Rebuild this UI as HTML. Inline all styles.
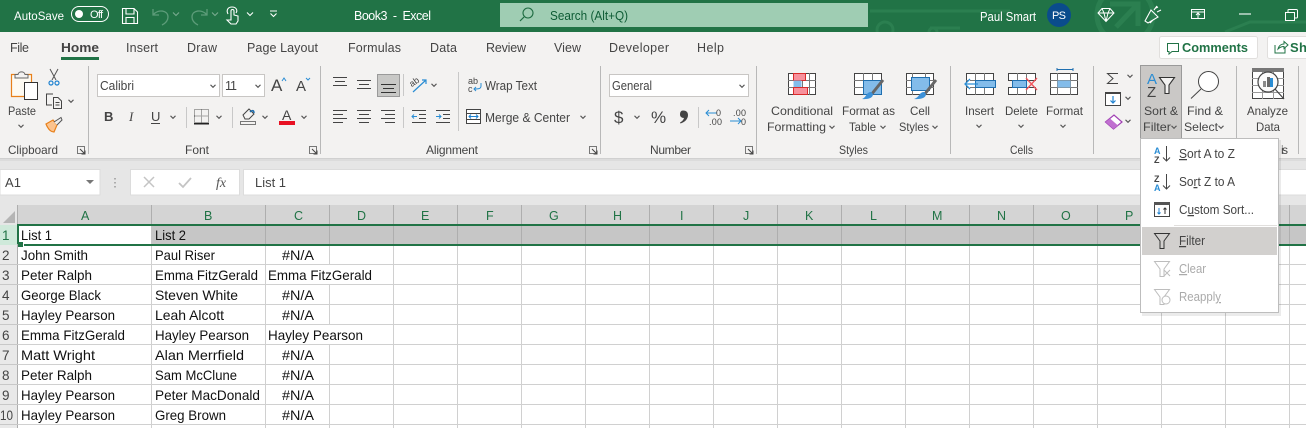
<!DOCTYPE html>
<html><head><meta charset="utf-8"><title>Book3 - Excel</title>
<style>
html,body{margin:0;padding:0;width:1306px;height:428px;overflow:hidden;background:#fff}
svg{display:block}
text{font-family:"Liberation Sans",sans-serif;font-size:12px;fill:#444;white-space:pre}
.w{fill:#fff}
.c{font-size:14px;fill:#111}
.t{font-size:12.5px;fill:#444}
.h{font-size:12.5px;fill:#217346}
.n{font-size:13.5px;fill:#444}
.m{font-size:12.5px;fill:#444}
.d{font-size:12.5px;fill:#aaa}
</style></head><body>
<svg width="1306" height="428" viewBox="0 0 1306 428" xmlns="http://www.w3.org/2000/svg">
<defs>
<path id="cv" d="M-2.500 -1.200L0 1.300L2.500 -1.200" fill="none" stroke="#555" stroke-width="1.100"/>
<path id="cw" d="M-3 -1.500L0 1.500L3 -1.500" fill="none" stroke="#fff" stroke-width="1.100"/>
<g id="dl"><rect x="0.500" y="0.500" width="7" height="7" fill="none" stroke="#777"/><path d="M3 3L8 8M8 4.500V8H4.500" fill="none" stroke="#444"/></g>
</defs>

<!-- title bar -->
<rect width="1306" height="32" fill="#217346"/>
<g fill="none" stroke="#2b7f50" stroke-width="3">
<circle cx="1125" cy="15" r="28" stroke-width="5"/><path d="M1110 4H1138V26M1136 6L1116 27" stroke-width="5"/>
<path d="M870 11H1010"/><circle cx="885" cy="30" r="8"/><circle cx="933" cy="32" r="4"/><path d="M1225 32L1250 22H1306M930 28H960"/>
</g>
<text class="w" x="14" y="20" textLength="50" lengthAdjust="spacingAndGlyphs">AutoSave</text>
<rect x="71.500" y="6.500" width="37" height="15" rx="7.500" fill="none" stroke="#fff"/>
<circle cx="79" cy="14" r="4" fill="#fff"/>
<text class="w" x="90" y="18" style="font-size:11px" textLength="13">Off</text>
<path d="M122.500 8.500H134L137.500 12V23.500H122.500ZM126 8.500V14H134V8.500M126 23.500V17.500H134V23.500" fill="none" stroke="#fff" stroke-width="1.100"/>
<path d="M153 9V15H159M153.500 14.500C158 9 168 10 168 17C168 20 166 23 162 25" fill="none" stroke="#5c9c79" stroke-width="1.300"/>
<use href="#cw" x="176" y="14" opacity=".4"/>
<path d="M207 9V15H201M206.500 14.500C202 9 192 10 192 17C192 20 194 23 198 25" fill="none" stroke="#5c9c79" stroke-width="1.300"/>
<use href="#cw" x="215" y="14" opacity=".4"/>
<path d="M231 20V11C231 9 234 9 234 11V15L238 16V21L236 24H231L227 20Z M228 14C226 10 228 7 232 7C236 7 238 10 236 13" fill="none" stroke="#fff" stroke-width="1.100"/>
<use href="#cw" x="250" y="14"/>
<path d="M270 11H277" stroke="#fff"/><use href="#cw" x="273.500" y="15"/>
<text class="w" x="354" y="20" textLength="77" style="font-size:12.500px">Book3  -  Excel</text>
<rect x="500" y="3" width="368" height="24" fill="#9fcdb3"/>
<circle cx="528" cy="13" r="5" fill="none" stroke="#1d6b40" stroke-width="1.100"/><path d="M524 17L520 21" stroke="#1d6b40" stroke-width="1.200"/>
<text x="550" y="20" textLength="78" lengthAdjust="spacingAndGlyphs" style="fill:#0e5c35;font-size:12.500px">Search (Alt+Q)</text>
<text class="w" x="980" y="21" textLength="56" lengthAdjust="spacingAndGlyphs" style="font-size:12.500px">Paul Smart</text>
<circle cx="1059" cy="15" r="12" fill="#0a4c8c"/>
<text class="w" x="1052" y="19" style="font-size:11px" textLength="14">PS</text>
<path d="M1102 8.500H1110L1114 13L1106 21.500L1098 13ZM1098 13H1114M1102 8.500L1104 13L1106 21.500L1108 13L1110 8.500" fill="none" stroke="#fff"/>
<path d="M1145 21L1151 10L1158 17L1148 23ZM1150 23L1153 20M1154 10L1157 6M1157 12L1161 10M1156 8L1158 7" fill="none" stroke="#fff" stroke-width="1.100"/>
<path d="M1191.500 9.500H1204.500V18.500H1191.500ZM1191.500 12H1204.500M1198 18V13M1196 15L1198 13L1200 15" fill="none" stroke="#fff"/>
<path d="M1239 14H1251" stroke="#fff" stroke-width="1.100"/>
<path d="M1285.500 12.500H1294.500V20.500H1285.500ZM1288 12V10C1288 9.500 1288 9.500 1289 9.500H1296C1297.500 9.500 1297.500 10 1297.500 11V17C1297.500 18 1297 18 1295 18" fill="none" stroke="#fff"/>

<!-- ribbon bg -->
<rect y="32" width="1306" height="126" fill="#f3f2f1"/>
<rect y="158" width="1306" height="47" fill="#e6e6e6"/>
<rect y="158" width="1306" height="1" fill="#d0d0d0"/><rect y="159" width="1306" height="2" fill="#dcdcdc"/>

<!-- tabs -->
<text class="t" x="10" y="52" textLength="19">File</text>
<text class="t" x="61" y="52" textLength="38" lengthAdjust="spacingAndGlyphs" style="font-weight:bold;fill:#444">Home</text>
<rect x="61" y="57" width="38" height="3" fill="#217346"/>
<text class="t" x="126" y="52" textLength="32">Insert</text>
<text class="t" x="187" y="52" textLength="30">Draw</text>
<text class="t" x="247" y="52" textLength="71">Page Layout</text>
<text class="t" x="348" y="52" textLength="53">Formulas</text>
<text class="t" x="430" y="52" textLength="27">Data</text>
<text class="t" x="486" y="52" textLength="40">Review</text>
<text class="t" x="554" y="52" textLength="27">View</text>
<text class="t" x="609" y="52" textLength="60">Developer</text>
<text class="t" x="697" y="52" textLength="27">Help</text>
<rect x="1159.500" y="36.500" width="98" height="22" rx="2" fill="#fff" stroke="#e1dfdd"/>
<path d="M1167.500 43.500H1178.500V51.500H1172L1169 54V51.500H1167.500Z" fill="none" stroke="#217346"/>
<text x="1182" y="52" textLength="66" lengthAdjust="spacingAndGlyphs" style="font-size:13px;font-weight:bold;fill:#217346">Comments</text>
<rect x="1267.500" y="36.500" width="60" height="22" rx="2" fill="#fff" stroke="#e1dfdd"/>
<path d="M1275 45V53H1285V48M1278 49C1279 45 1282 44 1284 44V41.500L1288 45L1284 48.500V46.500C1282 46.500 1280 47 1278 49Z" fill="none" stroke="#217346"/>
<text x="1290" y="52" textLength="17" style="font-size:13px;font-weight:bold;fill:#217346">Sh</text>

<!-- separators -->
<g fill="#b8b8b8">
<rect x="88" y="66" width="1" height="88"/><rect x="320" y="66" width="1" height="88"/><rect x="600" y="66" width="1" height="88"/><rect x="756" y="66" width="1" height="88"/><rect x="950" y="66" width="1" height="88"/><rect x="1093" y="66" width="1" height="88"/><rect x="1236" y="66" width="1" height="88"/><rect x="1298" y="66" width="1" height="88"/>
</g>
<g fill="#c8c8c8"><rect x="186" y="107" width="1" height="21"/><rect x="232" y="107" width="1" height="21"/><rect x="403" y="74" width="1" height="22"/><rect x="403" y="107" width="1" height="21"/><rect x="458" y="72" width="1" height="59"/><rect x="698" y="107" width="1" height="21"/></g>

<!-- group labels -->
<text x="8" y="154" textLength="50" lengthAdjust="spacingAndGlyphs">Clipboard</text>
<text x="185" y="154" textLength="24">Font</text>
<text x="426" y="154" textLength="52">Alignment</text>
<text x="650" y="154" textLength="41">Number</text>
<text x="839" y="154" textLength="29" lengthAdjust="spacingAndGlyphs">Styles</text>
<text x="1010" y="154" textLength="23" lengthAdjust="spacingAndGlyphs">Cells</text>
<text x="1281" y="154" textLength="7">is</text>
<use href="#dl" x="77" y="146"/><use href="#dl" x="309" y="146"/><use href="#dl" x="589" y="146"/><use href="#dl" x="745" y="146"/>

<!-- clipboard -->
<path d="M11.500 74.500H31.500V96.500H11.500Z" fill="#fdfaf2" stroke="#e8801a" stroke-width="1.200"/>
<path d="M15 78V74.500H18C18.500 71 24.500 71 25 74.500H28V78Z" fill="#f3f2f1" stroke="#666"/>
<rect x="24.500" y="82.500" width="13" height="17" fill="#fff" stroke="#333"/>
<text x="8" y="115" textLength="28" lengthAdjust="spacingAndGlyphs">Paste</text><use href="#cv" x="21" y="126"/>
<path d="M50 69L56 80M58 69L52 80" fill="none" stroke="#555"/><circle cx="51" cy="83" r="2" fill="none" stroke="#1f82d0" stroke-width="1.200"/><circle cx="57" cy="83" r="2" fill="none" stroke="#1f82d0" stroke-width="1.200"/>
<path d="M52 105H46.500V94H53M53.500 97.500H58L61.500 101V108.500H53.500ZM55.500 102.500H59.500M55.500 105H59.500" fill="none" stroke="#444"/><use href="#cv" x="71" y="101"/>
<path d="M46 124L53 120L57 125L54 132C51 132 48 129 46 124Z" fill="#fbc38e" stroke="#e8801a" stroke-width="1.200"/><path d="M54 122L61 117.500L62 120L57 125" fill="#eee" stroke="#555"/>

<!-- font -->
<rect x="97.500" y="74.500" width="122" height="22" fill="#fff" stroke="#c8c6c4"/>
<text x="100" y="90" textLength="34" lengthAdjust="spacingAndGlyphs" style="font-size:12.500px">Calibri</text><use href="#cv" x="213" y="86"/>
<rect x="222.500" y="74.500" width="42" height="22" fill="#fff" stroke="#c8c6c4"/>
<text x="225" y="90" textLength="12" style="font-size:12.500px">11</text><use href="#cv" x="258" y="86"/>
<text x="271" y="91" style="font-size:17px" textLength="11">A</text><path d="M282 81L284 78L286 81" fill="none" stroke="#2a8dd4"/>
<text x="296" y="91" style="font-size:15px" textLength="10">A</text><path d="M306 78L308 80L310 78" fill="none" stroke="#2a8dd4"/>
<text x="104" y="121" style="font-weight:bold;font-size:13px" textLength="9">B</text>
<text x="129" y="121" style="font-style:italic;font-size:13px;font-family:'Liberation Serif',serif" textLength="6">I</text>
<text x="151" y="121" style="font-size:13px" textLength="9">U</text><path d="M151 123.500H160" stroke="#444"/>
<use href="#cv" x="173" y="117"/>
<path d="M194.500 109.500H208.500V122.500H194.500ZM201.500 109.500V122.500M194.500 116H208.500" fill="none" stroke="#555" stroke-dasharray="1 1"/><rect x="194" y="123" width="15" height="1.500" fill="#222"/>
<use href="#cv" x="219" y="117"/>
<path d="M243 115L249 109L254 114L249 119H245Z" fill="none" stroke="#444"/><path d="M250 112C252 110 254 110 254 113" fill="none" stroke="#1f6fb0" stroke-width="1.500"/><rect x="240.500" y="121.500" width="15" height="3" fill="#f3f2f1" stroke="#777"/>
<use href="#cv" x="265" y="117"/>
<text x="282" y="120" style="font-size:14px" textLength="11">A</text><rect x="279" y="121" width="16" height="4" fill="#e81123"/>
<use href="#cv" x="304" y="117"/>

<!-- alignment -->
<g stroke="#444" fill="none">
<path d="M333 77.500H347M335 81.500H345M333 85.500H347"/>
<path d="M357 80.500H371M359 84.500H369M357 88.500H371"/>
</g>
<rect x="377.500" y="74.500" width="22" height="22" fill="#c8c8c6" stroke="#9a9a9a"/>
<path d="M381 84.500H396M383 88.500H394M381 92.500H396" stroke="#333" fill="none"/>
<path d="M333 110.500H347M333 114.500H343M333 118.500H347M333 122.500H343M357 110.500H371M359 114.500H369M357 118.500H371M359 122.500H369M381 110.500H395M385 114.500H395M381 118.500H395M385 122.500H395" stroke="#444" fill="none"/>
<text x="411" y="85" style="font-size:9px" transform="rotate(-35 415 85)">ab</text><path d="M413 92L426 80M422 80H426V84" fill="none" stroke="#2a8dd4" stroke-width="1.200"/>
<use href="#cv" x="434" y="85"/>
<path d="M412 110.500H426M412 122.500H426M419 114.500H426M419 118.500H426" stroke="#444" fill="none"/><path d="M417 116.500H412M414 114.500L412 116.500L414 118.500" stroke="#2a8dd4" fill="none"/>
<path d="M436 110.500H450M436 122.500H450M443 114.500H450M443 118.500H450" stroke="#444" fill="none"/><path d="M436 116.500H441M439 114.500L441 116.500L439 118.500" stroke="#2a8dd4" fill="none"/>
<text x="468" y="84" style="font-size:9px">ab</text><text x="468" y="92" style="font-size:9px">c</text><path d="M481 83V86C481 89 478 89 474 89M476 87L474 89L476 91" fill="none" stroke="#2a8dd4"/>
<text x="485" y="90" textLength="52" style="font-size:12.500px" lengthAdjust="spacingAndGlyphs">Wrap Text</text>
<rect x="466.500" y="109.500" width="14" height="14" fill="#fff" stroke="#444"/><path d="M466 113.500H481M466 119.500H481" stroke="#444"/><rect x="467" y="114" width="13" height="5" fill="#fff"/><path d="M469 116.500H478M471 114.500L469 116.500L471 118.500M476 114.500L478 116.500L476 118.500" stroke="#1f82d0" fill="none"/>
<text x="485" y="122" textLength="85" style="font-size:12.500px" lengthAdjust="spacingAndGlyphs">Merge &amp; Center</text><use href="#cv" x="583" y="117"/>

<!-- number -->
<rect x="609.500" y="74.500" width="139" height="22" fill="#fff" stroke="#c8c6c4"/>
<text x="612" y="90" textLength="40" style="font-size:12.500px" lengthAdjust="spacingAndGlyphs">General</text><use href="#cv" x="742" y="86"/>
<text x="614" y="123" style="font-size:17px" textLength="9.500">$</text><use href="#cv" x="637" y="117"/>
<text x="651" y="123" style="font-size:17px" textLength="16">%</text>
<path d="M683 110.500C686 110.500 688 112 688 115C688 119 685 122 680.500 123.500L680 122.500C682 121.500 683.500 120 684 118C681.500 118 680 116.500 680 114.500C680 112 681 110.500 683 110.500Z" fill="#444"/>
<path d="M717 113H706M709 110L706 113L709 116" fill="none" stroke="#2a8dd4"/>
<text x="716" y="116" style="font-size:9px">0</text><text x="709" y="125" style="font-size:9px" textLength="13">.00</text>
<text x="733" y="116" style="font-size:9px" textLength="13">.00</text><path d="M730 121H741M738 118L741 121L738 124" fill="none" stroke="#2a8dd4"/><text x="741" y="125" style="font-size:9px">0</text>

<!-- styles icons -->
<g>
<rect x="788.500" y="73.500" width="27" height="21" fill="#fff" stroke="#444"/>
<path d="M788 80.500H816M788 87.500H816M795.500 73V95M802.500 73V95M809.500 73V95" stroke="#777" fill="none"/>
<rect x="793.500" y="73.500" width="12" height="7" fill="#f7919c" stroke="#d92b2b"/>
<rect x="793.500" y="80.500" width="8" height="7" fill="#83bcea"/>
<rect x="793.500" y="87.500" width="14" height="7" fill="#f7919c" stroke="#d92b2b"/>

<rect x="854.500" y="73.500" width="27" height="21" fill="#fff" stroke="#444"/>
<path d="M854 80.500H882M854 87.500H882M863.500 73V95M872.500 73V95" stroke="#777" fill="none"/>
<rect x="863.500" y="80.500" width="18" height="14" fill="#83bcea" stroke="#1f6fb0"/>
<path d="M871 95L883 80" stroke="#666" stroke-width="3"/><path d="M871 92C875 94 873 100 862 99C867 97 866 92 871 92Z" fill="#3c91d8"/>

<rect x="906.500" y="73.500" width="27" height="21" fill="#fff" stroke="#444"/>
<path d="M906 80.500H934M906 87.500H934M912.500 73V95M925.500 73V95" stroke="#777" fill="none"/>
<rect x="911.500" y="77.500" width="18" height="13" fill="#83bcea" stroke="#1f6fb0"/>
<path d="M924 95L936 80" stroke="#666" stroke-width="3"/><path d="M924 92C928 94 926 100 914 99C920 97 919 92 924 92Z" fill="#3c91d8"/>
</g>
<text x="771" y="115" textLength="62" lengthAdjust="spacingAndGlyphs">Conditional</text>
<text x="767" y="131" textLength="59" lengthAdjust="spacingAndGlyphs">Formatting</text><use href="#cv" x="832" y="127"/>
<text x="842" y="115" textLength="53" lengthAdjust="spacingAndGlyphs">Format as</text>
<text x="849" y="131" textLength="27" lengthAdjust="spacingAndGlyphs">Table</text><use href="#cv" x="883" y="127"/>
<text x="910" y="115" textLength="20" lengthAdjust="spacingAndGlyphs">Cell</text>
<text x="899" y="131" textLength="30" lengthAdjust="spacingAndGlyphs">Styles</text><use href="#cv" x="935" y="127"/>

<!-- cells -->
<rect x="966.500" y="73.500" width="27" height="21" fill="#fff" stroke="#444"/>
<path d="M966 80.500H994M966 87.500H994M975.500 73V95M984.500 73V95" stroke="#777" fill="none"/>
<rect x="975.500" y="80.500" width="20" height="7" fill="#83bcea" stroke="#1f6fb0"/>
<path d="M965 84H978M970 79L965 84L970 89" fill="#fff" stroke="#2a8dd4" stroke-width="1.300"/>
<path d="M1008.500 73.500H1035.500V80.500H1008.500ZM1008.500 87.500H1035.500V94.500H1008.500Z" fill="#fff" stroke="#444"/>
<path d="M1017.500 73V80M1026.500 73V80M1017.500 87V95M1026.500 87V95" stroke="#777"/>
<rect x="1012.500" y="80.500" width="14" height="7" fill="#83bcea" stroke="#1f6fb0"/>
<path d="M1026 78L1037 90M1037 78L1026 90" stroke="#f0555d" stroke-width="1.300"/>
<path d="M1057 69.500H1073M1057 68V71M1073 68V71" stroke="#1f6fb0" fill="none"/>
<rect x="1050.500" y="73.500" width="27" height="21" fill="#fff" stroke="#444"/>
<path d="M1050 80.500H1078M1050 87.500H1078M1057.500 73V95M1070.500 73V95" stroke="#777" fill="none"/>
<rect x="1057.500" y="80.500" width="13" height="7" fill="#83bcea"/>
<text x="965" y="115" textLength="29" lengthAdjust="spacingAndGlyphs">Insert</text><use href="#cv" x="979" y="126"/>
<text x="1005" y="115" textLength="33" lengthAdjust="spacingAndGlyphs">Delete</text><use href="#cv" x="1021" y="126"/>
<text x="1046" y="115" textLength="37" lengthAdjust="spacingAndGlyphs">Format</text><use href="#cv" x="1063" y="126"/>

<!-- editing -->
<path d="M1118 73.500H1107.500L1113 78.500L1107.500 83.500H1118" fill="none" stroke="#444"/>
<use href="#cv" x="1130" y="76"/>
<rect x="1105.500" y="92.500" width="15" height="13" fill="#fff" stroke="#444"/><rect x="1105" y="92" width="16" height="2" fill="#444"/>
<path d="M1113 96V103M1110.500 100.500L1113 103L1115.500 100.500" fill="none" stroke="#1f82d0" stroke-width="1.200"/>
<use href="#cv" x="1128" y="98"/>
<path d="M1105.500 122L1114 115L1122 122L1113.500 129Z" fill="#fff" stroke="#a03fb3" stroke-width="1.200"/><path d="M1105.500 122L1110 118.500L1118 125.500L1113.500 129Z" fill="#c070d0"/>
<use href="#cv" x="1128" y="121"/>

<rect x="1140.500" y="65.500" width="41" height="73" fill="#cac8c6" stroke="#9a9a9a"/>
<text x="1147" y="84" style="font-size:15px;fill:#2a8dd4" textLength="11">A</text>
<text x="1147" y="97" style="font-size:15px;fill:#444" textLength="10">Z</text>
<path d="M1159.500 77.500H1174.500L1169 85V93.500H1165V85Z" fill="#f3f2f1" stroke="#333" stroke-width="1.100"/>
<text x="1144" y="115" textLength="34" lengthAdjust="spacingAndGlyphs">Sort &amp;</text>
<text x="1143" y="131" textLength="28" lengthAdjust="spacingAndGlyphs">Filter</text><use href="#cv" x="1174" y="127"/>
<circle cx="1208.500" cy="81.500" r="10" fill="#fff" stroke="#444"/><path d="M1201 89L1191 98.500" stroke="#444"/>
<text x="1187" y="115" textLength="36" lengthAdjust="spacingAndGlyphs">Find &amp;</text>
<text x="1184" y="131" textLength="34" lengthAdjust="spacingAndGlyphs">Select</text><use href="#cv" x="1221" y="127"/>

<rect x="1252.500" y="69.500" width="31" height="29" fill="#fff" stroke="#444"/><rect x="1252" y="68" width="32" height="4" fill="#777"/>
<path d="M1252 78.500H1284M1252 85.500H1284M1252 92.500H1284M1262.500 72V99M1273.500 72V99" stroke="#999"/>
<circle cx="1268" cy="82" r="10" fill="#fafafa" stroke="#444" stroke-width="1.200"/>
<rect x="1263" y="81" width="3" height="6" fill="#888"/><rect x="1267" y="77" width="3" height="10" fill="#666"/><rect x="1270" y="78" width="3" height="9" fill="#2a8dd4"/>
<path d="M1275 89L1284 99" stroke="#444" stroke-width="1.200"/>
<text x="1247" y="115" textLength="41" lengthAdjust="spacingAndGlyphs">Analyze</text>
<text x="1256" y="131" textLength="24" lengthAdjust="spacingAndGlyphs">Data</text>

<!-- name box / formula -->
<rect x="0" y="169.500" width="100" height="25.500" fill="#fff" stroke="#dcdcdc"/>
<text x="5" y="187" style="font-size:13px" textLength="16">A1</text>
<path d="M86 180H94L90 184Z" fill="#777"/>
<path d="M115 178V179.500M115 182V183.500M115 186V187.500" stroke="#999" stroke-width="1.500"/>
<rect x="130.500" y="169.500" width="109" height="25.500" fill="#fff" stroke="#dcdcdc"/>
<path d="M144 177L154 187M154 177L144 187" stroke="#c4c4c4" stroke-width="1.500"/>
<path d="M179 183L183 187L191 178" stroke="#c4c4c4" stroke-width="1.800" fill="none"/>
<text x="216" y="187" style="font-family:'Liberation Serif',serif;font-style:italic;font-size:14px;fill:#555">fx</text>
<rect x="243.500" y="169.500" width="1070" height="25.500" fill="#fff" stroke="#dcdcdc"/>
<text x="255" y="187" style="font-size:13px" textLength="31" lengthAdjust="spacingAndGlyphs">List 1</text>

<!-- headers -->
<rect x="0" y="205" width="1306" height="20" fill="#d4d4d4"/>
<rect x="0" y="205" width="18" height="20" fill="#e6e6e6"/>
<path d="M15 211V223H3Z" fill="#b5b5b5"/>
<rect x="0" y="225" width="18" height="203" fill="#e9e9e9"/>
<rect x="0" y="225" width="18" height="20" fill="#cfe9da"/>

<!-- row 1 fill -->
<rect x="151" y="226" width="1155" height="18" fill="#c6c6c6"/>

<!-- grid -->
<g stroke="#d0d0d0">
<path d="M18 264.500H1306M18 284.500H1306M18 304.500H1306M18 324.500H1306M18 344.500H1306M18 364.500H1306M18 384.500H1306M18 404.500H1306M18 424.500H1306"/>
<path d="M151.500 245V428M265.500 245V428M329.500 245V265M329.500 284V325M329.500 344V428M393.500 245V428M457.500 245V428M521.500 245V428M585.500 245V428M649.500 245V428M713.500 245V428M777.500 245V428M841.500 245V428M905.500 245V428M969.500 245V428M1033.500 245V428M1097.500 245V428M1161.500 245V428M1225.500 245V428M1289.500 245V428"/>
</g>
<g stroke="#aeaeae">
<path d="M17.500 205V428M151.500 205V225M265.500 205V225M329.500 205V225M393.500 205V225M457.500 205V225M521.500 205V225M585.500 205V225M649.500 205V225M713.500 205V225M777.500 205V225M841.500 205V225M905.500 205V225M969.500 205V225M1033.500 205V225M1097.500 205V225M1161.500 205V225M1225.500 205V225M1289.500 205V225"/>
<path d="M0 264.500H18M0 284.500H18M0 304.500H18M0 324.500H18M0 344.500H18M0 364.500H18M0 384.500H18M0 404.500H18M0 424.500H18" stroke="#c8c8c8"/>
<path d="M265.500 226V244M329.500 226V244M393.500 226V244M457.500 226V244M521.500 226V244M585.500 226V244M649.500 226V244M713.500 226V244M777.500 226V244M841.500 226V244M905.500 226V244M969.500 226V244M1033.500 226V244M1097.500 226V244M1161.500 226V244M1225.500 226V244M1289.500 226V244"/>
</g>
<text class="h" x="81" y="220">A</text><text class="h" x="204" y="220">B</text><text class="h" x="294" y="220">C</text><text class="h" x="357" y="220">D</text><text class="h" x="421" y="220">E</text><text class="h" x="486" y="220">F</text><text class="h" x="549" y="220">G</text><text class="h" x="613" y="220">H</text><text class="h" x="680" y="220">I</text><text class="h" x="743" y="220">J</text><text class="h" x="805" y="220">K</text><text class="h" x="870" y="220">L</text><text class="h" x="932" y="220">M</text><text class="h" x="997" y="220">N</text><text class="h" x="1061" y="220">O</text><text class="h" x="1125" y="220">P</text>
<text class="n" x="2" y="240" style="fill:#217346">1</text>
<text class="n" x="2" y="260">2</text><text class="n" x="2" y="280">3</text><text class="n" x="2" y="300">4</text><text class="n" x="2" y="320">5</text><text class="n" x="2" y="340">6</text><text class="n" x="2" y="360">7</text><text class="n" x="2" y="380">8</text><text class="n" x="2" y="400">9</text><text class="n" x="0" y="420" textLength="13" lengthAdjust="spacingAndGlyphs">10</text>
<rect x="18" y="224" width="1288" height="2" fill="#217346"/>
<rect x="18" y="244" width="1288" height="2" fill="#217346"/>
<rect x="17" y="224" width="2" height="20" fill="#217346"/>
<rect x="22" y="243" width="2" height="3" fill="#fff"/>
<rect x="18" y="242" width="5" height="5" fill="#217346"/>

<!-- cell text -->
<text class="c" x="21" y="240" textLength="31" lengthAdjust="spacingAndGlyphs">List 1</text>
<text class="c" x="155" y="240" textLength="31" lengthAdjust="spacingAndGlyphs">List 2</text>
<text class="c" x="21" y="260" textLength="67" lengthAdjust="spacingAndGlyphs">John Smith</text>
<text class="c" x="21" y="280" textLength="71" lengthAdjust="spacingAndGlyphs">Peter Ralph</text>
<text class="c" x="21" y="300" textLength="80" lengthAdjust="spacingAndGlyphs">George Black</text>
<text class="c" x="21" y="320" textLength="94" lengthAdjust="spacingAndGlyphs">Hayley Pearson</text>
<text class="c" x="21" y="340" textLength="104" lengthAdjust="spacingAndGlyphs">Emma FitzGerald</text>
<text class="c" x="21" y="360" textLength="74" lengthAdjust="spacingAndGlyphs">Matt Wright</text>
<text class="c" x="21" y="380" textLength="71" lengthAdjust="spacingAndGlyphs">Peter Ralph</text>
<text class="c" x="21" y="400" textLength="94" lengthAdjust="spacingAndGlyphs">Hayley Pearson</text>
<text class="c" x="21" y="420" textLength="94" lengthAdjust="spacingAndGlyphs">Hayley Pearson</text>
<text class="c" x="155" y="260" textLength="60" lengthAdjust="spacingAndGlyphs">Paul Riser</text>
<text class="c" x="155" y="280" textLength="103" lengthAdjust="spacingAndGlyphs">Emma FitzGerald</text>
<text class="c" x="155" y="300" textLength="83" lengthAdjust="spacingAndGlyphs">Steven White</text>
<text class="c" x="155" y="320" textLength="69" lengthAdjust="spacingAndGlyphs">Leah Alcott</text>
<text class="c" x="155" y="340" textLength="94" lengthAdjust="spacingAndGlyphs">Hayley Pearson</text>
<text class="c" x="155" y="360" textLength="89" lengthAdjust="spacingAndGlyphs">Alan Merrfield</text>
<text class="c" x="155" y="380" textLength="82" lengthAdjust="spacingAndGlyphs">Sam McClune</text>
<text class="c" x="155" y="400" textLength="105" lengthAdjust="spacingAndGlyphs">Peter MacDonald</text>
<text class="c" x="155" y="420" textLength="71" lengthAdjust="spacingAndGlyphs">Greg Brown</text>
<text class="c" x="282" y="260" textLength="32" lengthAdjust="spacingAndGlyphs">#N/A</text>
<text class="c" x="268" y="280" textLength="104" lengthAdjust="spacingAndGlyphs">Emma FitzGerald</text>
<text class="c" x="282" y="300" textLength="32" lengthAdjust="spacingAndGlyphs">#N/A</text>
<text class="c" x="282" y="320" textLength="32" lengthAdjust="spacingAndGlyphs">#N/A</text>
<text class="c" x="268" y="340" textLength="95" lengthAdjust="spacingAndGlyphs">Hayley Pearson</text>
<text class="c" x="282" y="360" textLength="32" lengthAdjust="spacingAndGlyphs">#N/A</text>
<text class="c" x="282" y="380" textLength="32" lengthAdjust="spacingAndGlyphs">#N/A</text>
<text class="c" x="282" y="400" textLength="32" lengthAdjust="spacingAndGlyphs">#N/A</text>
<text class="c" x="282" y="420" textLength="32" lengthAdjust="spacingAndGlyphs">#N/A</text>

<!-- menu -->
<rect x="1142" y="140" width="139" height="176" fill="#000" opacity=".08"/>
<rect x="1140.500" y="138.500" width="138" height="174" fill="#fff" stroke="#bdbdbd"/>
<rect x="1142" y="227" width="135" height="28" fill="#d2d0ce"/>
<rect x="1174" y="225" width="103" height="1" fill="#e1dfdd"/>

<text x="1154" y="154" style="font-size:9px;font-weight:bold;fill:#2a8dd4">A</text><text x="1154" y="163" style="font-size:9px;font-weight:bold;fill:#444">Z</text>
<path d="M1166.500 146V161M1163 157.500L1166.500 161L1170 157.500" fill="none" stroke="#444"/>
<text class="m" x="1179" y="158" textLength="56" lengthAdjust="spacingAndGlyphs"><tspan text-decoration="underline">S</tspan>ort A to Z</text>
<text x="1154" y="182" style="font-size:9px;font-weight:bold;fill:#444">Z</text><text x="1154" y="191" style="font-size:9px;font-weight:bold;fill:#2a8dd4">A</text>
<path d="M1166.500 174V189M1163 185.500L1166.500 189L1170 185.500" fill="none" stroke="#444"/>
<text class="m" x="1179" y="186" textLength="56" lengthAdjust="spacingAndGlyphs">So<tspan text-decoration="underline">r</tspan>t Z to A</text>
<rect x="1154.500" y="202.500" width="15" height="14" fill="#fff" stroke="#444"/><rect x="1154" y="202" width="16" height="3" fill="#555"/>
<path d="M1159 208V214M1157.500 212.500L1159 214L1160.500 212.500" fill="none" stroke="#1f82d0"/><path d="M1165 214V208M1163.500 209.500L1165 208L1166.500 209.500" fill="none" stroke="#333"/>
<text class="m" x="1179" y="214" textLength="75" lengthAdjust="spacingAndGlyphs">C<tspan text-decoration="underline">u</tspan>stom Sort...</text>
<path d="M1154.500 233.500H1169.500L1164 241V248.500H1160V241Z" fill="none" stroke="#333"/>
<text class="m" x="1179" y="245" textLength="26" lengthAdjust="spacingAndGlyphs"><tspan text-decoration="underline">F</tspan>ilter</text>
<path d="M1154.500 261.500H1169.500L1164 269V276.500H1160V269Z" fill="none" stroke="#bdbdbd"/><path d="M1164 270L1170 276M1170 270L1164 276" stroke="#bdbdbd"/>
<text class="d" x="1179" y="273" textLength="27" lengthAdjust="spacingAndGlyphs"><tspan text-decoration="underline">C</tspan>lear</text>
<path d="M1154.500 289.500H1169.500L1164 297V304.500H1160V297Z" fill="none" stroke="#bdbdbd"/><circle cx="1166" cy="300" r="4" fill="#fff" stroke="#bdbdbd"/>
<text class="d" x="1179" y="301" textLength="42" lengthAdjust="spacingAndGlyphs">Reappl<tspan text-decoration="underline">y</tspan></text>
</svg>
</body></html>
